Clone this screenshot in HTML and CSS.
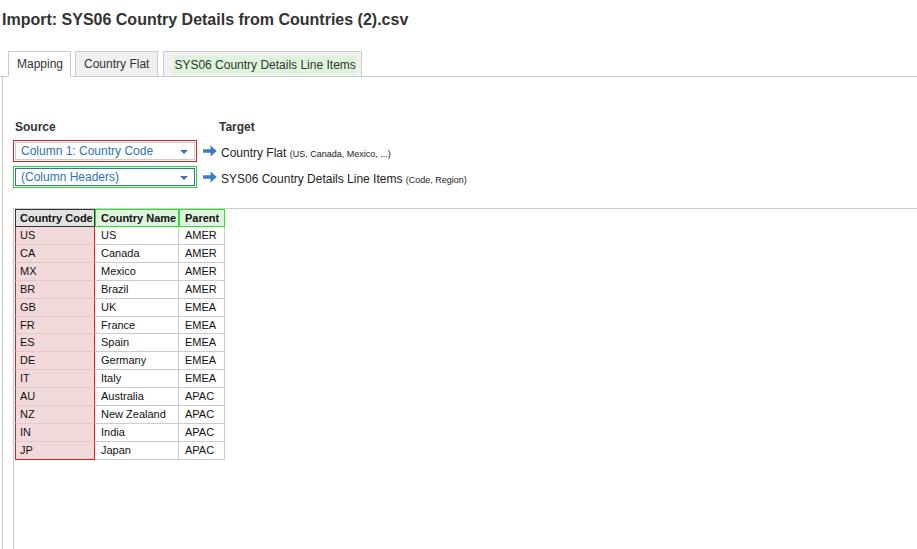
FILE: index.html
```html
<!DOCTYPE html>
<html lang="en">
<head>
  <meta charset="UTF-8" />
  <title>Import</title>
  <link rel="stylesheet" href="styles.css">
</head>
<body>
  <div class="page">
    <h1 class="title">Import: SYS06 Country Details from Countries (2).csv</h1>

    <div class="tabs">
      <div class="tab active">Mapping</div>
      <div class="tab">Country Flat</div>
      <div class="tab tab-green"><span>SYS06 Country Details Line Items</span></div>
    </div>

    <div class="panel">
      <div class="mapping">
        <div class="map-head">
          <span class="head-source">Source</span>
          <span class="head-target">Target</span>
        </div>

        <div class="map-row">
          <div class="select-wrap red">
            <div class="select-box">
              <span>Column 1: Country Code</span>
              <span class="caret"></span>
            </div>
          </div>
          <svg class="arrow" width="14" height="12" viewBox="0 0 14 12">
            <path d="M0 4.2 H7.5 V0.5 L13.8 6 L7.5 11.5 V7.8 H0 Z" fill="#3b7fc0" />
          </svg>
          <span class="target">Country Flat <small>(US, Canada, Mexico, ...)</small></span>
        </div>

        <div class="map-row">
          <div class="select-wrap green">
            <div class="select-box focus">
              <span>(Column Headers)</span>
              <span class="caret"></span>
            </div>
          </div>
          <svg class="arrow" width="14" height="12" viewBox="0 0 14 12">
            <path d="M0 4.2 H7.5 V0.5 L13.8 6 L7.5 11.5 V7.8 H0 Z" fill="#3b7fc0" />
          </svg>
          <span class="target">SYS06 Country Details Line Items <small>(Code, Region)</small></span>
        </div>
      </div>

      <div class="preview">
        <table class="data">
          <colgroup>
            <col class="c-code">
            <col class="c-name">
            <col class="c-parent">
          </colgroup>
          <thead>
            <tr>
              <th class="h-code">Country Code</th>
              <th class="h-green">Country Name</th>
              <th class="h-green">Parent</th>
            </tr>
          </thead>
          <tbody>
            <tr><td class="code">US</td><td>US</td><td>AMER</td></tr>
            <tr><td class="code">CA</td><td>Canada</td><td>AMER</td></tr>
            <tr><td class="code">MX</td><td>Mexico</td><td>AMER</td></tr>
            <tr><td class="code">BR</td><td>Brazil</td><td>AMER</td></tr>
            <tr><td class="code">GB</td><td>UK</td><td>EMEA</td></tr>
            <tr><td class="code">FR</td><td>France</td><td>EMEA</td></tr>
            <tr><td class="code">ES</td><td>Spain</td><td>EMEA</td></tr>
            <tr><td class="code">DE</td><td>Germany</td><td>EMEA</td></tr>
            <tr><td class="code">IT</td><td>Italy</td><td>EMEA</td></tr>
            <tr><td class="code">AU</td><td>Australia</td><td>APAC</td></tr>
            <tr><td class="code">NZ</td><td>New Zealand</td><td>APAC</td></tr>
            <tr><td class="code">IN</td><td>India</td><td>APAC</td></tr>
            <tr class="last"><td class="code">JP</td><td>Japan</td><td>APAC</td></tr>
          </tbody>
        </table>
      </div>
    </div>
  </div>
</body>
</html>
```

FILE: styles.css
```css
* {
  margin: 0;
  padding: 0;
  box-sizing: border-box;
  font-family: "Liberation Sans", Arial, sans-serif;
}

body {
  background: #fff;
  color: #222;
  overflow: hidden;
}

.page {
  height: 100vh;
  display: flex;
  flex-direction: column;
}

.title {
  font-size: 16px;
  line-height: 20px;
  font-weight: bold;
  color: #333;
  padding: 10px 2px 0;
}

/* tabs */
.tabs {
  display: flex;
  gap: 4px;
  margin-top: 21px;
  padding-left: 8px;
  height: 26px;
  border-bottom: 1px solid #ccc;
}

.tab {
  font-size: 12px;
  line-height: 24px;
  color: #333;
  padding: 0 8px;
  background: #f0f0f0;
  border: 1px solid #ccc;
  margin-bottom: -1px;
}

.tab.active {
  background: #fff;
  border-bottom-color: #fff;
  padding: 0 7px 0 8px;
}

.tab-green {
  margin-left: 1px;
  padding: 0 4px 0 9px;
}

.tab-green span {
  display: inline-block;
  line-height: 18px;
  padding: 0 1px;
  background: #dcf5dc;
  vertical-align: middle;
}

/* panel */
.panel {
  flex: 1;
  display: flex;
  flex-direction: column;
  margin-left: 2px;
  border-left: 1px solid #ccc;
}

.mapping {
  padding: 42px 0 20px 10px;
}

.map-head {
  display: flex;
  font-size: 12px;
  line-height: 16px;
  font-weight: bold;
  color: #333;
  margin-bottom: 5px;
}

.head-source {
  width: 206px;
  padding-left: 2px;
}

.map-row {
  display: flex;
  align-items: center;
  margin-bottom: 4px;
}

.map-row:last-child {
  margin-bottom: 0;
}

.select-wrap {
  width: 184px;
  height: 22px;
  padding: 1px;
  border: 1px solid;
}

.select-wrap.red {
  border-color: #e41b1b;
}

.select-wrap.green {
  border-color: #22dd22;
}

.select-box {
  height: 18px;
  border: 1px solid #ccc;
  display: flex;
  align-items: center;
  justify-content: space-between;
  padding: 0 6px 0 5px;
  font-size: 12px;
  color: #2e73b3;
}

.select-box.focus {
  border-color: #3a6fa8;
}

.caret {
  width: 0;
  height: 0;
  margin-top: 2px;
  border-left: 4px solid transparent;
  border-right: 4px solid transparent;
  border-top: 4px solid #3a6fa8;
}

.arrow {
  margin: 0 4px 0 6px;
}

.target {
  font-size: 12px;
  color: #222;
  padding-top: 3px;
}

.target small {
  font-size: 9px;
}

/* preview table */
.preview {
  flex: 1;
  margin-left: 10px;
  border-top: 1px solid #ccc;
  border-left: 1px solid #ccc;
}

.data {
  table-layout: fixed;
  width: 210px;
  border-collapse: separate;
  border-spacing: 0;
  margin-left: 1px;
  font-size: 11px;
  color: #111;
}

.c-code {
  width: 80px;
}

.c-name {
  width: 84px;
}

.c-parent {
  width: 46px;
}

.data th,
.data td {
  text-align: left;
  white-space: nowrap;
  overflow: hidden;
  line-height: 16px;
  padding: 0 2px 0 4px;
}

.data th {
  font-weight: bold;
}

.h-code {
  background: #e3e3e3;
  border: 1px solid #333;
}

.h-green {
  background: #dcf5dc;
  border: 1px solid #33dd33;
}

.data th.h-green {
  padding-left: 5px;
}

.data td {
  line-height: 16.9px;
  border-right: 1px solid #ccc;
  border-bottom: 1px solid #ccc;
  padding-left: 6px;
}

.data td.code {
  background: #f2dada;
  border-left: 1px solid #e41b1b;
  border-right: 1px solid #e41b1b;
  border-bottom-color: #e2c8c8;
  padding-left: 4px;
}

.data tr.last td.code {
  border-bottom-color: #e41b1b;
}
```
